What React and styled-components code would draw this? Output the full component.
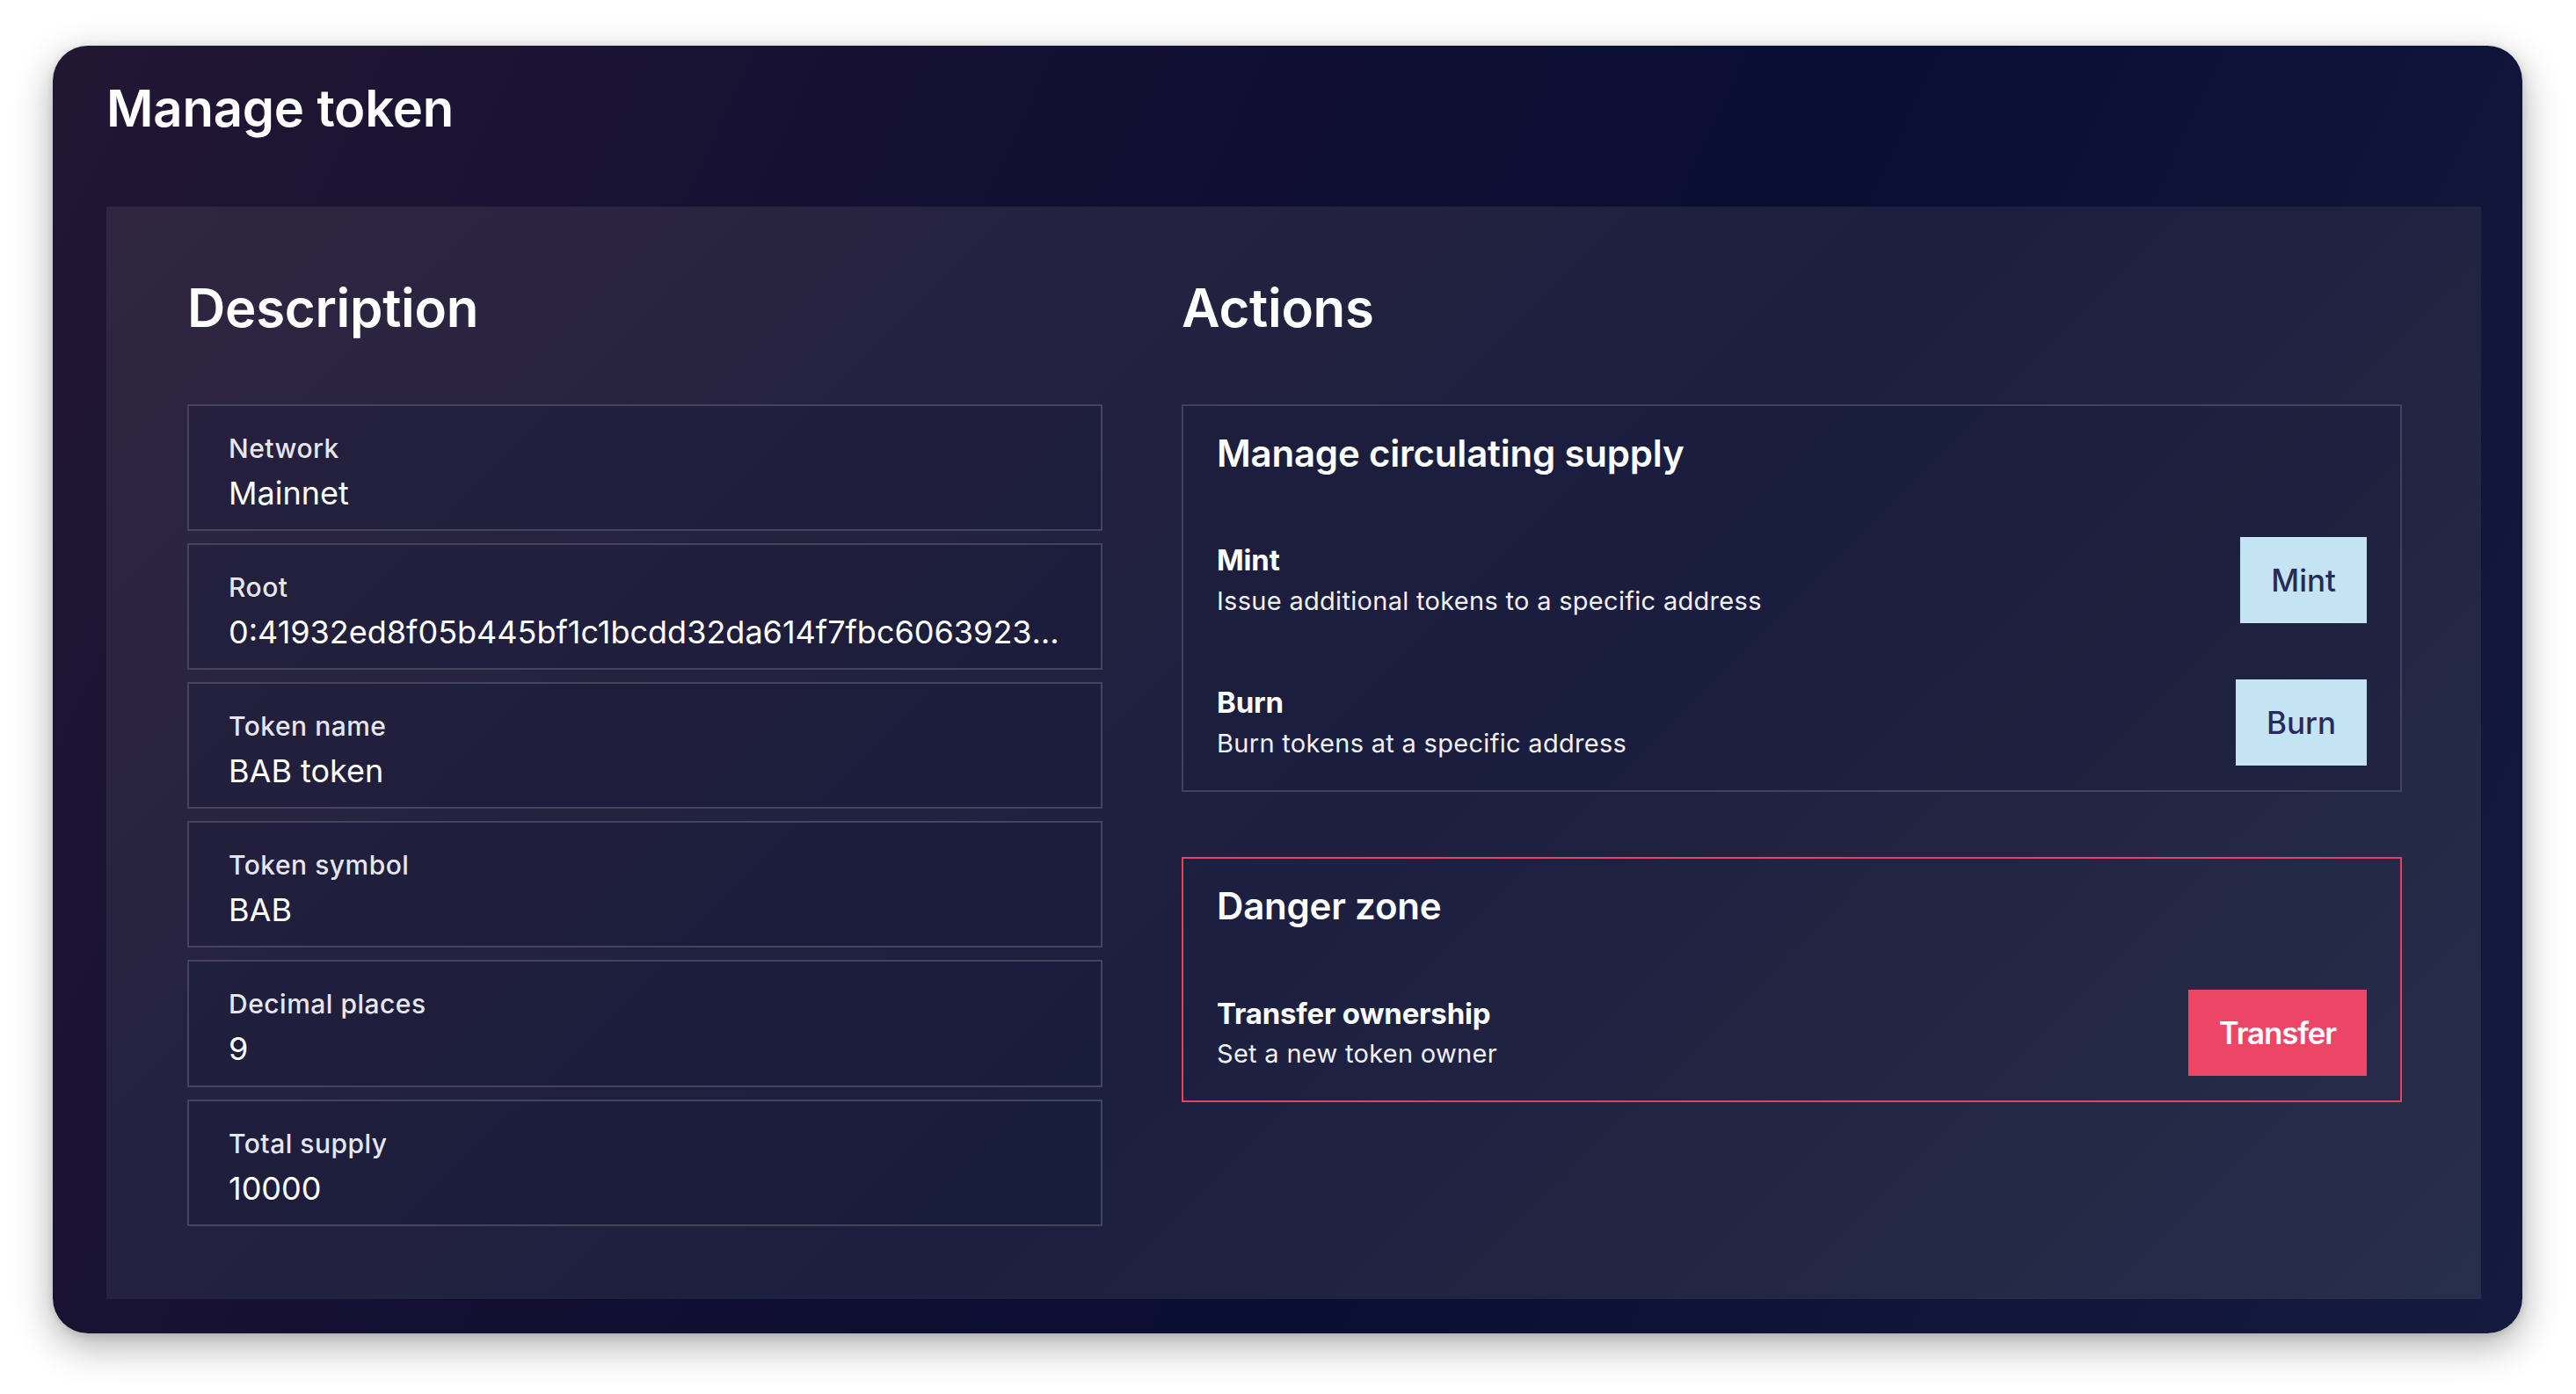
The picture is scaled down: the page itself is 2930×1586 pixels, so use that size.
import React from "react";
import styled, { createGlobalStyle } from "styled-components";

const GlobalStyle = createGlobalStyle`
  html, body {
    margin: 0;
    padding: 0;
    background: #ffffff;
  }
  body {
    font-family: "Inter", "Lato", "Liberation Sans", sans-serif;
    color: #ffffff;
    -webkit-font-smoothing: antialiased;
  }
  * { box-sizing: border-box; }
`;

const Page = styled.div`
  padding: 52px 61px 69px 60px;
`;

const Card = styled.section`
  border-radius: 40px;
  background: linear-gradient(115deg, #221733 0%, #120f33 35%, #0a0e33 60%, #151b3e 100%);
  box-shadow: 0 14px 44px rgba(0, 0, 0, 0.32), 0 2px 10px rgba(0, 0, 0, 0.12);
  padding: 37px 47px 39px 61px;
`;

const PageTitle = styled.h1`
  margin: 0 0 76px;
  font-size: 58px;
  line-height: 1.2;
  font-weight: 600;
  letter-spacing: -0.2px;
  color: #ffffff;
`;

const Panel = styled.div`
  display: grid;
  grid-template-columns: 3fr 4fr;
  column-gap: 90px;
  padding: 79px 90px 83px 92px;
  background: linear-gradient(135deg, #302641 0%, #24223f 30%, #1c1f40 55%, #222642 75%, #282e4d 100%);
`;

const Column = styled.div`
  display: flex;
  flex-direction: column;
  min-width: 0;
`;

const SectionTitle = styled.h2`
  margin: 0 0 74px;
  font-size: 60px;
  line-height: 1.2;
  font-weight: 600;
  letter-spacing: -0.3px;
  color: #ffffff;
`;

const FieldList = styled.div`
  display: flex;
  flex-direction: column;
  gap: 14px;
`;

const Field = styled.div`
  border: 2px solid #45445f;
  background: rgba(14, 16, 48, 0.22);
  padding: 30px 45px 19px;
  display: flex;
  flex-direction: column;
  gap: 12px;
  min-width: 0;
`;

const FieldLabel = styled.div`
  font-size: 30px;
  line-height: 1.2;
  font-weight: 500;
  letter-spacing: 0.5px;
  color: #e6e6ee;
`;

const FieldValue = styled.div`
  font-size: 36px;
  line-height: 1.2;
  font-weight: 400;
  color: #ffffff;
  white-space: nowrap;
  overflow: hidden;
  text-overflow: ellipsis;
`;

const ActionStack = styled.div`
  display: flex;
  flex-direction: column;
  gap: 74px;
`;

const ActionCard = styled.div`
  border: 2px solid ${(p) => (p.$danger ? "#e8415f" : "#3f435f")};
  background: ${(p) => (p.$danger ? "transparent" : "rgba(20, 24, 56, 0.25)")};
  padding: 29px 38px 28px;
  display: flex;
  flex-direction: column;
`;

const CardTitle = styled.h3`
  margin: 0 0 70px;
  font-size: 42px;
  line-height: 1.2;
  font-weight: 600;
  letter-spacing: -0.2px;
  color: #ffffff;
`;

const Rows = styled.div`
  display: flex;
  flex-direction: column;
  gap: 64px;
`;

const ActionRow = styled.div`
  display: flex;
  align-items: center;
  justify-content: space-between;
  gap: 40px;
`;

const ActionText = styled.div`
  display: flex;
  flex-direction: column;
  gap: 9px;
`;

const ActionTitle = styled.div`
  font-size: 33px;
  line-height: 1.2;
  font-weight: 700;
  letter-spacing: -0.2px;
  color: #ffffff;
`;

const ActionDesc = styled.div`
  font-size: 29px;
  line-height: 1.2;
  font-weight: 400;
  letter-spacing: 0.3px;
  color: #f0f0f5;
`;

const Button = styled.button`
  height: 98px;
  padding: 0 35px;
  border: none;
  border-radius: 0;
  font-family: inherit;
  font-size: 35px;
  font-weight: ${(p) => (p.$danger ? 600 : 500)};
  letter-spacing: ${(p) => (p.$danger ? "-1.2px" : "0")};
  background: ${(p) => (p.$danger ? "#ec4565" : "#c5e4f3")};
  color: ${(p) => (p.$danger ? "#ffffff" : "#272a5c")};
  cursor: pointer;
  flex-shrink: 0;
`;

const fields = [
  { label: "Network", value: "Mainnet" },
  {
    label: "Root",
    value: "0:41932ed8f05b445bf1c1bcdd32da614f7fbc606392381c8e4a0b7d2f91c3a5b6",
  },
  { label: "Token name", value: "BAB token" },
  { label: "Token symbol", value: "BAB" },
  { label: "Decimal places", value: "9" },
  { label: "Total supply", value: "10000" },
];

const supplyActions = [
  { title: "Mint", desc: "Issue additional tokens to a specific address", button: "Mint" },
  { title: "Burn", desc: "Burn tokens at a specific address", button: "Burn" },
];

export default function App() {
  return (
    <>
      <GlobalStyle />
      <Page>
        <Card>
          <PageTitle>Manage token</PageTitle>
          <Panel>
            <Column>
              <SectionTitle>Description</SectionTitle>
              <FieldList>
                {fields.map((f) => (
                  <Field key={f.label}>
                    <FieldLabel>{f.label}</FieldLabel>
                    <FieldValue>{f.value}</FieldValue>
                  </Field>
                ))}
              </FieldList>
            </Column>
            <Column>
              <SectionTitle>Actions</SectionTitle>
              <ActionStack>
                <ActionCard>
                  <CardTitle>Manage circulating supply</CardTitle>
                  <Rows>
                    {supplyActions.map((a) => (
                      <ActionRow key={a.title}>
                        <ActionText>
                          <ActionTitle>{a.title}</ActionTitle>
                          <ActionDesc>{a.desc}</ActionDesc>
                        </ActionText>
                        <Button>{a.button}</Button>
                      </ActionRow>
                    ))}
                  </Rows>
                </ActionCard>
                <ActionCard $danger>
                  <CardTitle>Danger zone</CardTitle>
                  <Rows>
                    <ActionRow>
                      <ActionText>
                        <ActionTitle>Transfer ownership</ActionTitle>
                        <ActionDesc>Set a new token owner</ActionDesc>
                      </ActionText>
                      <Button $danger>Transfer</Button>
                    </ActionRow>
                  </Rows>
                </ActionCard>
              </ActionStack>
            </Column>
          </Panel>
        </Card>
      </Page>
    </>
  );
}
